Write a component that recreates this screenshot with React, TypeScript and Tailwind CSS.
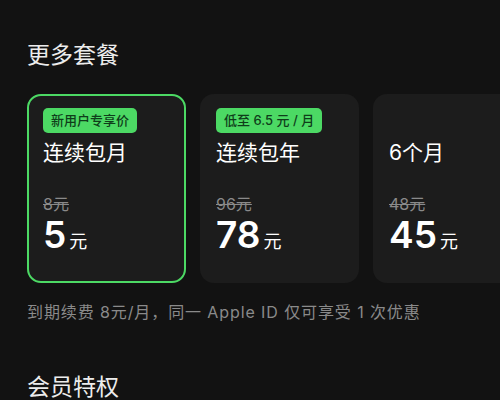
import React from 'react';

type Plan = {
  name: string;
  badge?: string;
  original: string;
  price: string;
  active?: boolean;
};

const plans: Plan[] = [
  { name: '连续包月', badge: '新用户专享价', original: '8元', price: '5', active: true },
  { name: '连续包年', badge: '低至 6.5 元 / 月', original: '96元', price: '78' },
  { name: '6个月', original: '48元', price: '45' },
];

const PlanCard: React.FC<{ plan: Plan }> = ({ plan }) => (
  <div
    className={`shrink-0 w-[159px] h-[189px] rounded-[14px] border-2 bg-[#1c1c1c] pl-[14px] pt-[12px] flex flex-col ${
      plan.active ? 'border-[#4cd964]' : 'border-transparent'
    }`}
  >
    {plan.badge ? (
      <span className="self-start h-[25px] px-[8px] rounded-[5px] bg-[#4cd964] text-[#0f3d1a] text-[13px] leading-[25px] font-medium">
        {plan.badge}
      </span>
    ) : (
      <span className="h-[25px]" />
    )}
    <div className="mt-[6px] text-[21px] leading-[28px] text-white">{plan.name}</div>
    <div className="mt-[28px] text-[16px] leading-[18px] text-[#8a8a8a] line-through">{plan.original}</div>
    <div className="mt-[2px] flex items-baseline text-white">
      <span className="text-[37px] leading-[40px] font-semibold">{plan.price}</span>
      <span className="ml-[3px] text-[18px] leading-[20px]">元</span>
    </div>
  </div>
);

export default function App() {
  return (
    <div
      className="w-[500px] h-[400px] overflow-hidden bg-[#121212] text-white"
      style={{ fontFamily: 'Inter, "Noto Sans CJK SC", sans-serif' }}
    >
      <h2 className="pt-[39px] pl-[27px] text-[23px] leading-[32px] text-[#ececec]">更多套餐</h2>
      <div className="mt-[23px] pl-[27px] flex gap-[14px] overflow-hidden">
        {plans.map((p) => (
          <PlanCard key={p.name} plan={p} />
        ))}
      </div>
      <p className="mt-[18px] pl-[27px] text-[16px] leading-[22px] tracking-[0.9px] text-[#8a8a8a]">
        到期续费 8元/月，同一 Apple ID 仅可享受 1 次优惠
      </p>
      <h2 className="mt-[50px] pl-[27px] text-[23px] leading-[28px] text-[#ececec]">会员特权</h2>
    </div>
  );
}
